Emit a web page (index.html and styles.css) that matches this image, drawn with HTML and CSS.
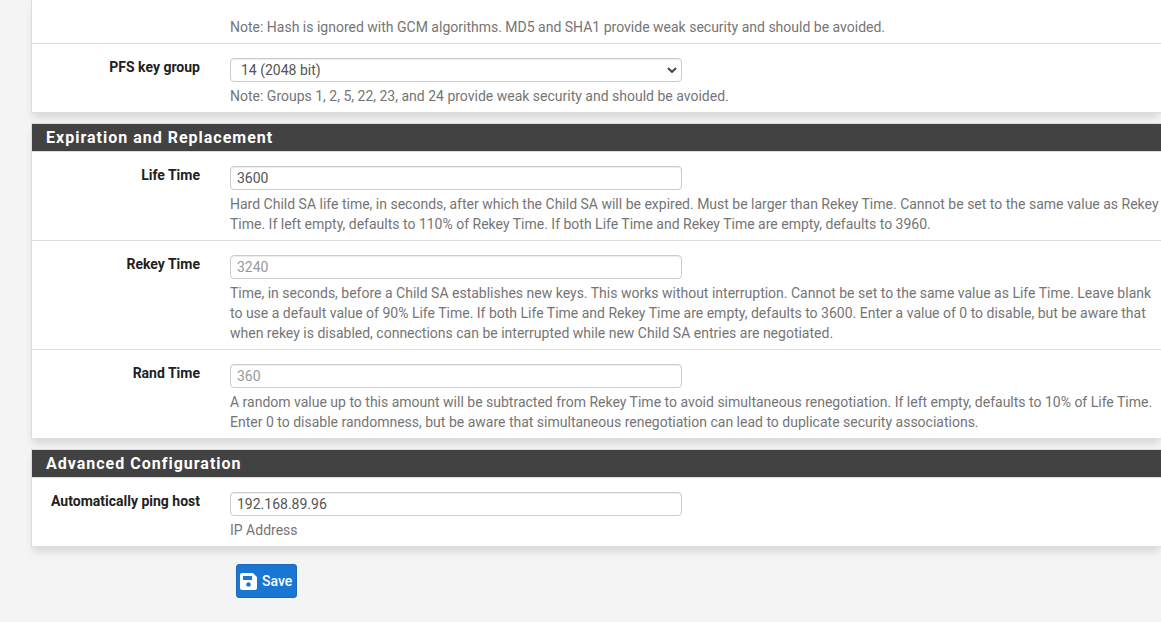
FILE: index.html
```html
<!DOCTYPE html>
<html lang="en">
<head>
<meta charset="utf-8">
<title>IPsec Phase 2</title>
<link rel="stylesheet" href="styles.css">
</head>
<body>
<form class="page">
  <section class="panel panel-continued">
    <div class="row row-continued">
      <div class="field">
        <p class="help">Note: Hash is ignored with GCM algorithms. MD5 and SHA1 provide weak security and should be avoided.</p>
      </div>
    </div>
    <div class="row">
      <label class="label" for="pfs">PFS key group</label>
      <div class="field">
        <div class="select-wrap">
          <select class="control select" id="pfs"><option>14 (2048 bit)</option></select>
          <svg class="chevron" viewBox="0 0 10 6" aria-hidden="true"><path d="M1 1l4 4 4-4" fill="none" stroke="#444" stroke-width="2"/></svg>
        </div>
        <p class="help">Note: Groups 1, 2, 5, 22, 23, and 24 provide weak security and should be avoided.</p>
      </div>
    </div>
  </section>

  <section class="panel">
    <h2 class="heading">Expiration and Replacement</h2>
    <div class="row">
      <label class="label" for="life">Life Time</label>
      <div class="field">
        <input class="control" id="life" type="text" value="3600">
        <p class="help">Hard Child SA life time, in seconds, after which the Child SA will be expired. Must be larger than Rekey Time. Cannot be set to the same value as Rekey<br>Time. If left empty, defaults to 110% of Rekey Time. If both Life Time and Rekey Time are empty, defaults to 3960.</p>
      </div>
    </div>
    <div class="row">
      <label class="label" for="rekey">Rekey Time</label>
      <div class="field">
        <input class="control" id="rekey" type="text" placeholder="3240">
        <p class="help">Time, in seconds, before a Child SA establishes new keys. This works without interruption. Cannot be set to the same value as Life Time. Leave blank<br>to use a default value of 90% Life Time. If both Life Time and Rekey Time are empty, defaults to 3600. Enter a value of 0 to disable, but be aware that<br>when rekey is disabled, connections can be interrupted while new Child SA entries are negotiated.</p>
      </div>
    </div>
    <div class="row">
      <label class="label" for="rand">Rand Time</label>
      <div class="field">
        <input class="control" id="rand" type="text" placeholder="360">
        <p class="help">A random value up to this amount will be subtracted from Rekey Time to avoid simultaneous renegotiation. If left empty, defaults to 10% of Life Time.<br>Enter 0 to disable randomness, but be aware that simultaneous renegotiation can lead to duplicate security associations.</p>
      </div>
    </div>
  </section>

  <section class="panel">
    <h2 class="heading">Advanced Configuration</h2>
    <div class="row">
      <label class="label" for="ping">Automatically ping host</label>
      <div class="field">
        <input class="control" id="ping" type="text" value="192.168.89.96">
        <p class="help">IP Address</p>
      </div>
    </div>
  </section>

  <div class="actions">
    <button class="save" type="submit">
      <svg class="save-icon" viewBox="0 0 17 17" aria-hidden="true"><path fill="#fff" fill-rule="evenodd" d="M2 0h11l4 4v11a2 2 0 0 1-2 2H2a2 2 0 0 1-2-2V2a2 2 0 0 1 2-2zM3 3v4h9V3zM8.500 9.200a2.300 2.300 0 1 0 0 4.600a2.300 2.300 0 0 0 0-4.600z"/></svg>
      <span>Save</span>
    </button>
  </div>
</form>
</body>
</html>
```
FILE: styles.css
```css
* { box-sizing: border-box; }

body {
  margin: 0;
  background: #f4f4f4;
  color: #212121;
  font: 14px/20px Roboto, "Liberation Sans", sans-serif;
  overflow-x: hidden;
}

.page { padding-left: 31px; }

.panel {
  margin-bottom: 10px;
  background: #fff;
  border: 1px solid #ddd;
  border-right: 0;
  box-shadow: 0 6px 8px -2px rgba(0, 0, 0, 0.13);
}

.panel-continued { border-top: 0; }

.heading {
  margin: 0;
  padding: 4px 14px 3px;
  background: #424242;
  border-bottom: 1px solid #ddd;
  color: #fff;
  font-size: 16px;
  line-height: 20px;
  font-weight: 700;
  letter-spacing: 1px;
}

.row {
  display: grid;
  grid-template-columns: 168px minmax(0, 1fr);
  column-gap: 30px;
  padding: 14px 0 6px;
  border-bottom: 1px solid #ddd;
}

.row:last-child { border-bottom: 0; }

.row-continued { padding-top: 17px; }
.row-continued .field { grid-column: 2; }

.label {
  line-height: 18px;
  text-align: right;
  font-weight: 700;
}

.control {
  display: block;
  width: 100%;
  height: 24px;
  padding: 0 6px;
  background: #fff;
  border: 1px solid #ccc;
  border-radius: 4px;
  box-shadow: inset 0 1px 1px rgba(0, 0, 0, 0.075);
  color: #555;
  font: inherit;
}

.field { --control-width: 452px; }
.field > .control,
.select-wrap { max-width: var(--control-width); }

.control::placeholder { color: #999; opacity: 1; }

.select-wrap { position: relative; }
.select { appearance: none; padding-left: 10px; }

.chevron {
  position: absolute;
  top: 9px;
  right: 5px;
  width: 10px;
  height: 6px;
  pointer-events: none;
}

.help {
  margin: 4px 0 0;
  color: #757575;
  white-space: nowrap;
}

.row-continued .help { margin-top: 0; }

.actions { padding: 7px 0 24px 205px; }

.save {
  display: flex;
  align-items: center;
  gap: 5px;
  height: 34px;
  padding: 0 4px 0 3px;
  background: #1976d2;
  border: 1px solid #1c69b5;
  border-radius: 3px;
  color: #fff;
  font: inherit;
  font-weight: 500;
}

.save-icon { width: 17px; height: 17px; }
```
